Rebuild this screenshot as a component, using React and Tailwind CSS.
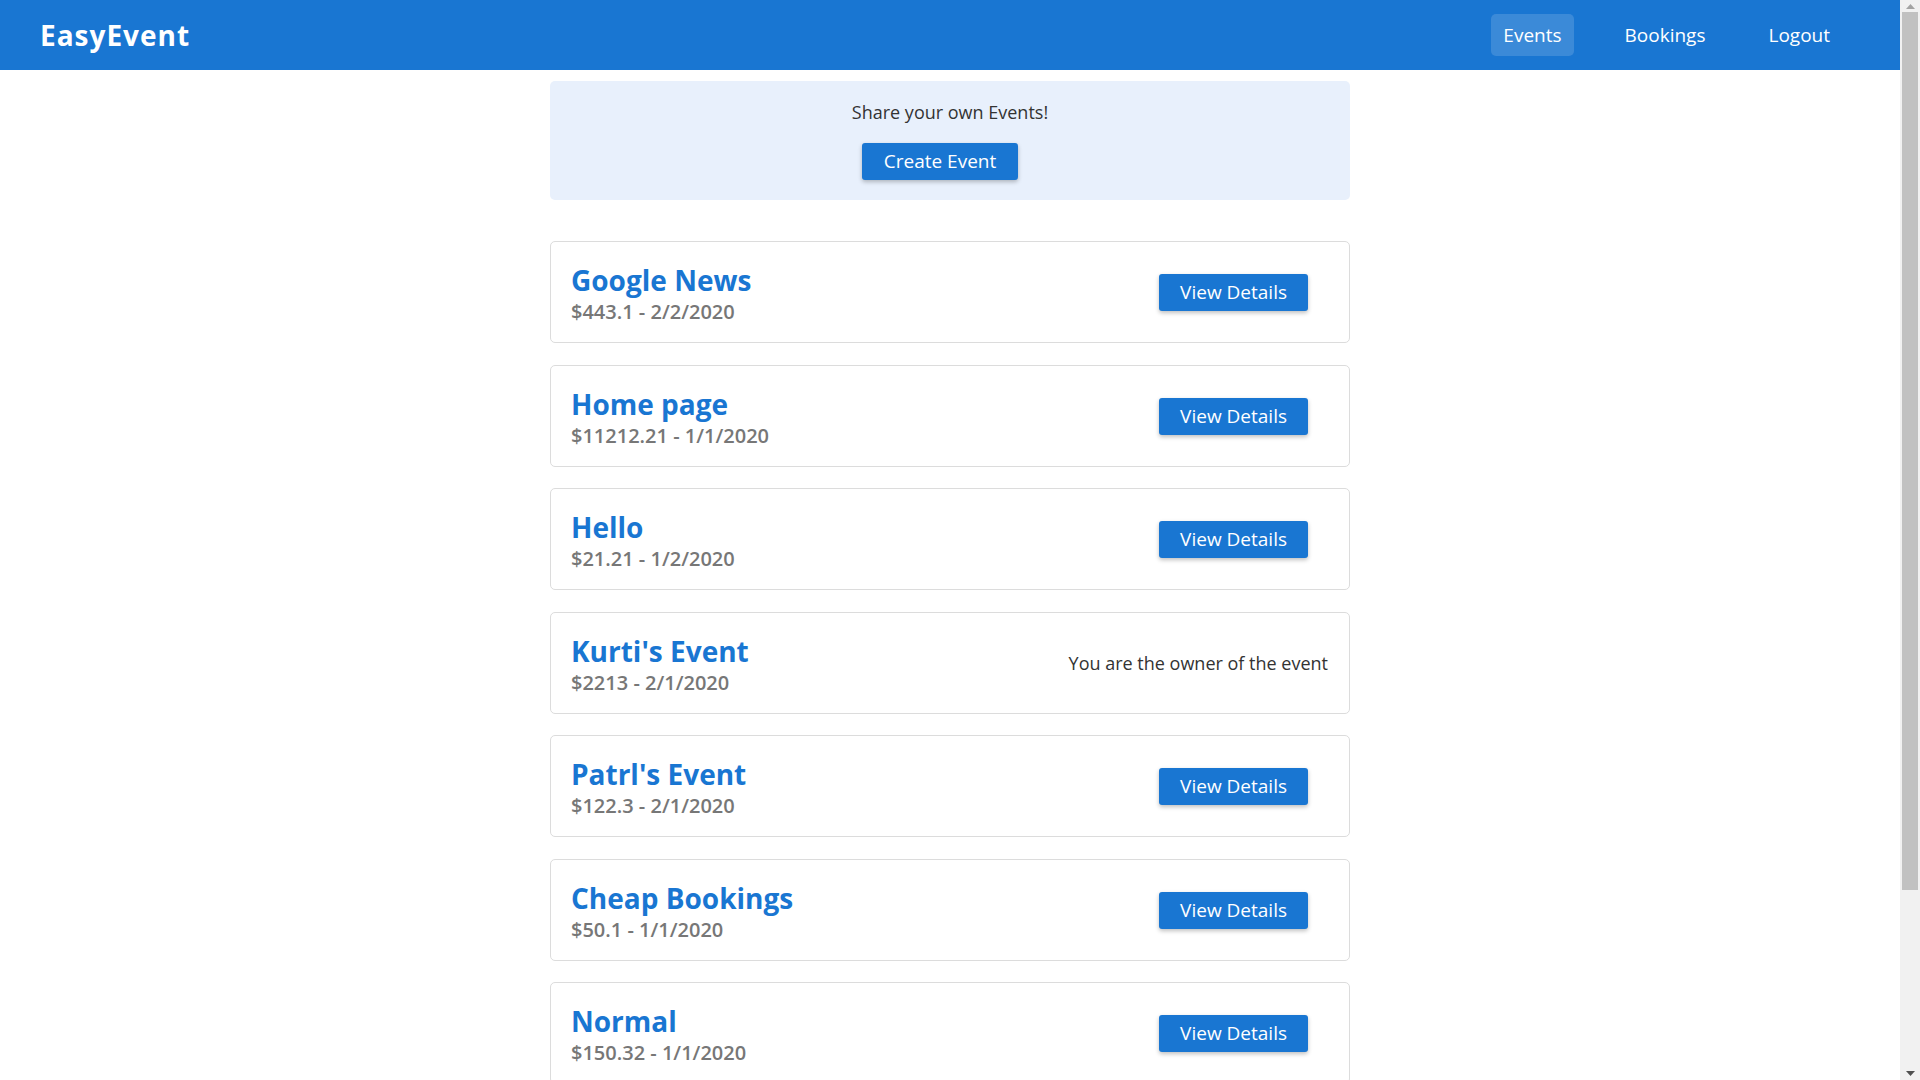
import React from "react";

const events = [
  { title: "Google News", price: "$443.1", date: "2/2/2020" },
  { title: "Home page", price: "$11212.21", date: "1/1/2020" },
  { title: "Hello", price: "$21.21", date: "1/2/2020" },
  { title: "Kurti's Event", price: "$2213", date: "2/1/2020", owner: true },
  { title: "Patrl's Event", price: "$122.3", date: "2/1/2020" },
  { title: "Cheap Bookings", price: "$50.1", date: "1/1/2020" },
  { title: "Normal", price: "$150.32", date: "1/1/2020" },
  { title: "Test Event", price: "$10", date: "1/1/2020" },
];

function Scrollbar() {
  return (
    <div className="fixed top-0 right-0 w-[20px] h-screen bg-[#f1f1f1] flex flex-col items-center">
      <div className="h-[12px] flex items-center justify-center">
        <svg width="9" height="5" viewBox="0 0 9 5"><path d="M0 5 L4.5 0 L9 5 Z" fill="#a3a3a3" /></svg>
      </div>
      <div className="w-[16px] h-[878px] bg-[#c1c1c1]" />
      <div className="flex-1" />
      <div className="h-[14px] flex items-center justify-center">
        <svg width="9" height="5" viewBox="0 0 9 5"><path d="M0 0 L9 0 L4.5 5 Z" fill="#505050" /></svg>
      </div>
    </div>
  );
}

export default function App() {
  return (
    <>
      <div className="mr-[20px] min-h-screen bg-white font-['Open_Sans',sans-serif] text-[#333]">
        <header className="h-[70px] bg-[#1976d2] flex items-center justify-between pl-[40px] pr-[58px]">
          <h1 className="text-white text-[28px] font-bold tracking-[1px]">EasyEvent</h1>
          <nav className="flex items-center gap-[39px]">
            <a className="h-[42px] px-[12px] flex items-center rounded-[5px] bg-white/15 text-white text-[19px]">Events</a>
            <a className="h-[42px] px-[12px] flex items-center text-white text-[19px]">Bookings</a>
            <a className="h-[42px] px-[12px] flex items-center text-white text-[19px]">Logout</a>
          </nav>
        </header>
        <main className="w-[800px] mx-auto pt-[11px] pb-[40px]">
          <section className="bg-[#e8f0fc] rounded-[5px] pt-[17px] pb-[20px] flex flex-col items-center">
            <p className="text-[18px] leading-[28px] text-[#333]">Share your own Events!</p>
            <button className="mt-[17px] mr-[20px] h-[37px] px-[22px] rounded-[3px] bg-[#1976d2] text-white text-[19px] font-medium shadow-[0_2px_4px_rgba(0,0,0,0.25)]">
              Create Event
            </button>
          </section>
          <ul className="mt-[41px] flex flex-col gap-[21.5px]">
            {events.map((e) => (
              <li
                key={e.title}
                className="border border-[#dcdcdc] rounded-[5px] pl-[20px] pr-[21px] pt-[20px] pb-[19px] flex items-center justify-between"
              >
                <div className="flex flex-col">
                  <span className="text-[#1976d2] text-[28px] leading-[36px] font-bold">{e.title}</span>
                  <span className="mt-[2px] text-[#777] text-[20px] leading-[23px] font-semibold">
                    {e.price} - {e.date}
                  </span>
                </div>
                {e.owner ? (
                  <span className="text-[18px] text-[#333]">You are the owner of the event</span>
                ) : (
                  <button className="mr-[20px] h-[37px] px-[21px] rounded-[3px] bg-[#1976d2] text-white text-[19px] font-medium shadow-[0_2px_4px_rgba(0,0,0,0.25)]">
                    View Details
                  </button>
                )}
              </li>
            ))}
          </ul>
        </main>
      </div>
      <Scrollbar />
    </>
  );
}
